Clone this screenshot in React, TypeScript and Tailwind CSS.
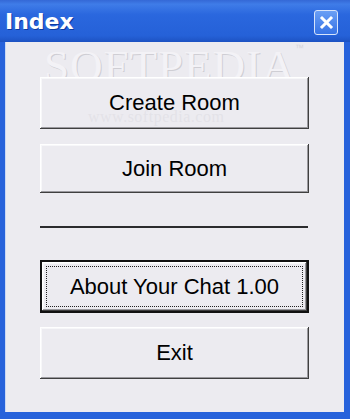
import React from 'react';

const btn =
  "w-[269px] flex items-center justify-center bg-[#ecebf0] text-black text-[22px] leading-none shadow-[inset_-1px_-1px_0_#3f3f3f,inset_1px_1px_0_#ffffff,inset_-2px_-2px_0_#9a999e,inset_2px_2px_0_#f7f7f9]";

const App = () => {
  return (
    <div className="w-[350px] h-[419px] flex flex-col bg-[#2762db] font-['Liberation_Sans',Arial,sans-serif] overflow-hidden select-none">
      {/* Title bar */}
      <div className="h-[42px] shrink-0 flex items-center justify-between pl-[5px] pr-[12px] bg-[linear-gradient(180deg,#3468d6_0%,#3f7ce8_10%,#2a67de_35%,#2561d8_85%,#1d52c2_100%)]">
        <span className="text-white text-[22px] font-bold font-['DejaVu_Sans',sans-serif] leading-none mt-[2px] [text-shadow:1px_1px_0_#0d3aa0]">
          Index
        </span>
        <div className="w-[24px] h-[25px] mt-[2px] rounded-[3px] border border-[#d7e4fb] bg-[linear-gradient(180deg,#6a9ff5,#3673e6)] flex items-center justify-center">
          <svg width="15" height="15" viewBox="0 0 15 15">
            <path d="M3 3 L12 12 M12 3 L3 12" stroke="#ffffff" strokeWidth="3" strokeLinecap="square" />
          </svg>
        </div>
      </div>

      {/* Frame + client area */}
      <div className="flex-1 flex pl-[5px] pr-[6px] pb-[7px] bg-[#2762db]">
        <div className="relative flex-1 flex flex-col pl-[34px] pt-[35px] bg-[#ecebf0] border-l border-[#c9d8f5]">
          {/* watermark */}
          <div className="absolute left-[38px] top-[2px] text-[45px] leading-none tracking-[1px] font-['Liberation_Serif',serif] text-[#f3f2f6] [text-shadow:1px_1px_0_#cfced4] pointer-events-none">
            SOFTPEDIA
          </div>
          <div className="absolute left-[289px] top-[0px] text-[9px] text-[#d6d5da] font-['Liberation_Sans',sans-serif] pointer-events-none">
            ™
          </div>

          <button className={`${btn} h-[52px] relative z-10`}>Create Room</button>
          <button className={`${btn} h-[49px] mt-[15px] relative z-10`}>Join Room</button>

          <div className="w-[268px] h-[2px] mt-[33px] bg-[#2b2b2e]" />

          <button className="w-[269px] h-[53px] mt-[32px] p-[2px] bg-[#111] flex">
            <span className="flex-1 flex bg-[#ecebf0] p-[4px] shadow-[inset_-1px_-1px_0_#3f3f3f,inset_1px_1px_0_#ffffff,inset_-2px_-2px_0_#9a999e,inset_2px_2px_0_#f7f7f9]">
              <span className="flex-1 flex items-center justify-center border border-dotted border-[#222] text-black text-[22px] leading-none">
                About Your Chat 1.00
              </span>
            </span>
          </button>

          <button className={`${btn} h-[52px] mt-[14px]`}>Exit</button>

          <div className="absolute left-[82px] top-[67px] z-20 text-[16px] leading-none tracking-[0.5px] font-['Liberation_Serif',serif] text-[#dddce2]/60 pointer-events-none">
            www.softpedia.com
          </div>
        </div>
      </div>
    </div>
  );
};

export default App;
